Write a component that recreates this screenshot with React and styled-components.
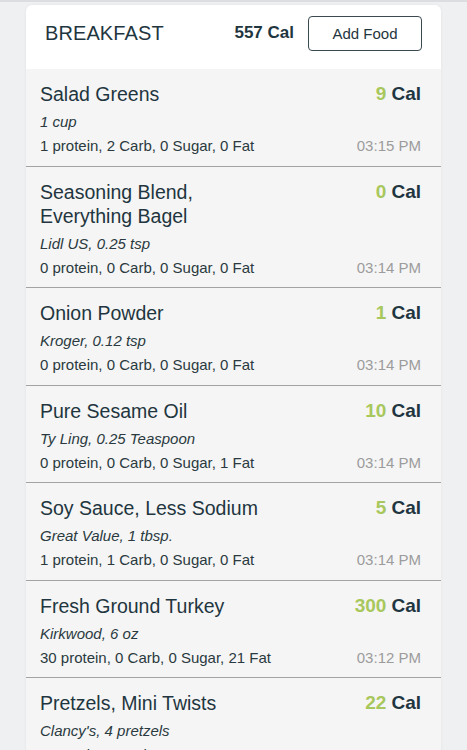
import styled, { createGlobalStyle } from "styled-components";

const GlobalStyle = createGlobalStyle`
  html, body {
    margin: 0;
    padding: 0;
    background: #eff0f2;
    font-family: "Liberation Sans", Arial, sans-serif;
  }
`;

const Page = styled.div`
  border-top: 2px solid #dcdde0;
  padding: 3px 26px 20px;
`;

const Card = styled.div`
  background: #ffffff;
  border-radius: 6px 6px 0 0;
  box-shadow: 0 0 3px rgba(0, 0, 0, 0.06);
  overflow: hidden;
`;

const Header = styled.div`
  height: 64px;
  display: flex;
  align-items: center;
  padding: 0 20px 8px 19px;
  box-sizing: border-box;
`;

const MealTitle = styled.div`
  flex: 1;
  font-size: 20px;
  color: #1f3640;
  letter-spacing: 0.1px;
`;

const Total = styled.div`
  font-size: 17px;
  font-weight: bold;
  color: #1f3640;
  margin-right: 14px;
`;

const AddButton = styled.button`
  width: 114px;
  height: 35px;
  border: 1px solid #3a4a50;
  border-radius: 4px;
  background: #fff;
  font-family: "Liberation Sans", Arial, sans-serif;
  font-size: 15px;
  color: #1f3640;
  padding: 0;
  margin-right: -1px;
`;

const Row = styled.div`
  background: #f5f5f5;
  border-bottom: 1px solid #a3a3a3;
  padding: 13px 20px 7.5px 14px;
`;

const Top = styled.div`
  display: flex;
  justify-content: space-between;
  align-items: flex-start;
  margin-bottom: 4px;
`;

const Name = styled.div`
  font-size: 19.5px;
  line-height: 24px;
  color: #1f3640;
  max-width: 240px;
`;

const Calories = styled.div`
  font-size: 19px;
  line-height: 24px;
  font-weight: bold;
  color: #1f3640;
  white-space: nowrap;
`;

const Num = styled.span`
  color: #a8c75c;
  margin-right: 5px;
`;

const Serving = styled.div`
  font-size: 15px;
  line-height: 24px;
  font-style: italic;
  color: #2a3a40;
`;

const Bottom = styled.div`
  display: flex;
  justify-content: space-between;
  font-size: 15px;
  line-height: 24px;
  color: #2a3a40;
`;

const Time = styled.span`
  color: #9c9c9c;
`;

const foods = [
  { name: "Salad Greens", cal: 9, serving: "1 cup", macros: "1 protein, 2 Carb, 0 Sugar, 0 Fat", time: "03:15 PM" },
  { name: "Seasoning Blend, Everything Bagel", cal: 0, serving: "Lidl US, 0.25 tsp", macros: "0 protein, 0 Carb, 0 Sugar, 0 Fat", time: "03:14 PM" },
  { name: "Onion Powder", cal: 1, serving: "Kroger, 0.12 tsp", macros: "0 protein, 0 Carb, 0 Sugar, 0 Fat", time: "03:14 PM" },
  { name: "Pure Sesame Oil", cal: 10, serving: "Ty Ling, 0.25 Teaspoon", macros: "0 protein, 0 Carb, 0 Sugar, 1 Fat", time: "03:14 PM" },
  { name: "Soy Sauce, Less Sodium", cal: 5, serving: "Great Value, 1 tbsp.", macros: "1 protein, 1 Carb, 0 Sugar, 0 Fat", time: "03:14 PM" },
  { name: "Fresh Ground Turkey", cal: 300, serving: "Kirkwood, 6 oz", macros: "30 protein, 0 Carb, 0 Sugar, 21 Fat", time: "03:12 PM" },
  { name: "Pretzels, Mini Twists", cal: 22, serving: "Clancy's, 4 pretzels", macros: "1 protein, 5 Carb, 0 Sugar, 0 Fat", time: "03:12 PM" },
];

export default function App() {
  return (
    <>
      <GlobalStyle />
      <Page>
        <Card>
          <Header>
            <MealTitle>BREAKFAST</MealTitle>
            <Total>557 Cal</Total>
            <AddButton>Add Food</AddButton>
          </Header>
          {foods.map((f) => (
            <Row key={f.name}>
              <Top>
                <Name>{f.name}</Name>
                <Calories>
                  <Num>{f.cal}</Num>Cal
                </Calories>
              </Top>
              <Serving>{f.serving}</Serving>
              <Bottom>
                <span>{f.macros}</span>
                <Time>{f.time}</Time>
              </Bottom>
            </Row>
          ))}
        </Card>
      </Page>
    </>
  );
}
